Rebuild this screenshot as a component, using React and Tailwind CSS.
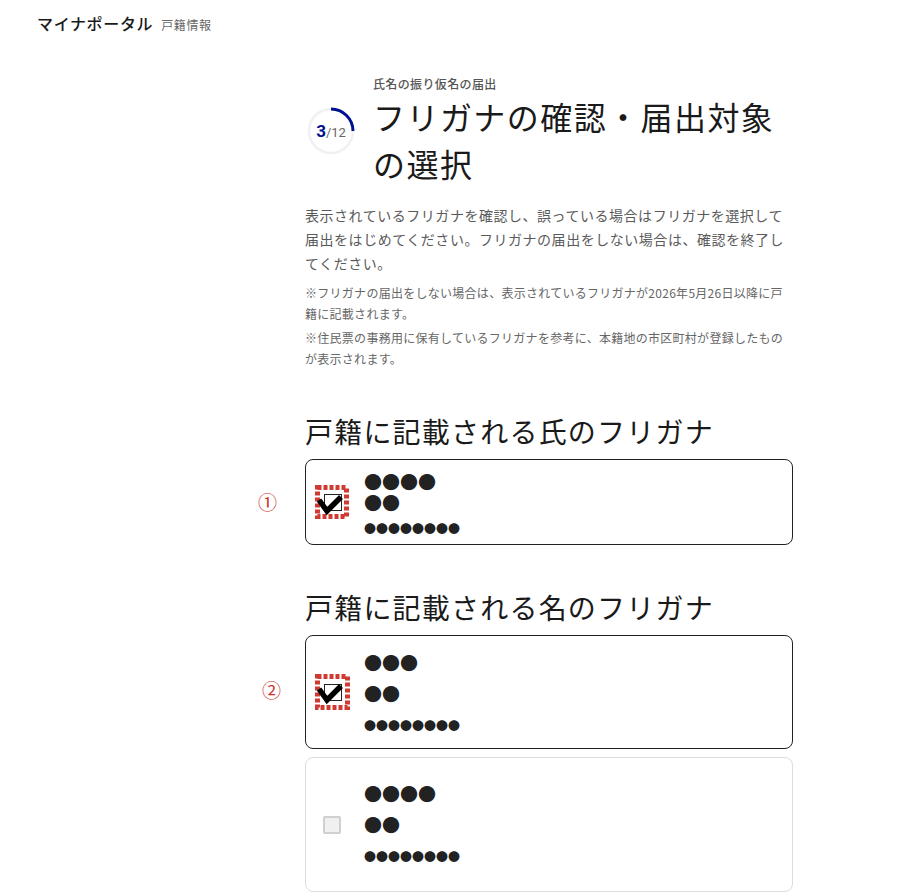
import React from 'react';

const jp = { fontFamily: '"Noto Sans CJK JP", sans-serif' };
const roboto = { fontFamily: 'Roboto, sans-serif' };

const Progress = () => (
  <div className="relative flex h-[48px] w-[48px] shrink-0 items-center justify-center tracking-normal" style={roboto}>
    <svg width="48" height="48" viewBox="0 0 48 48" className="absolute left-0 top-0">
      <circle cx="24" cy="24" r="22" fill="none" stroke="#f1f1f4" strokeWidth="2.5" />
      <path d="M24 2 A22 22 0 0 1 46 24" fill="none" stroke="#00118f" strokeWidth="3" />
    </svg>
    <span className="relative text-[17px] font-bold leading-none text-[#00118f]">3</span>
    <span className="relative mt-[3px] text-[13px] leading-none text-[#666]">/12</span>
  </div>
);

// 赤い点線の枠と太いチェックは説明用の書き込み
const MarkedCheckbox = ({ w, h }) => (
  <div className="relative flex shrink-0 items-center justify-center pl-[1px]" style={{ width: w, height: h }}>
    <svg width={w} height={h} className="absolute left-0 top-0">
      <rect x="2.5" y="2.5" width={w - 5} height={h - 5} fill="none" stroke="#cf3a32" strokeWidth="5" strokeDasharray="4 2" />
    </svg>
    <div className="relative h-[17px] w-[18px] border border-[#222] bg-white" />
    <svg width={w} height={h} className="absolute left-0 top-0">
      <path d="M4 15 L12 26 L26 12" fill="none" stroke="#000" strokeWidth="5.5" />
    </svg>
  </div>
);

const Card = ({ marked, w, h, mark, markClass, name, rowClass, smallClass, className, padClass = 'pt-[5px]' }) => (
  <div className={`relative flex items-center rounded-lg border pl-[9px] ${className}`}>
    {mark && (
      <span className={`absolute text-[19px] leading-none text-[#c8322c] ${markClass}`}>{mark}</span>
    )}
    {marked ? (
      <MarkedCheckbox w={w} h={h} />
    ) : (
      <div className="mx-[8px] h-[18px] w-[18px] rounded-[2px] border-2 border-[#d0d0d0] bg-[#f0f0f0]" />
    )}
    <div className={`${padClass} tracking-normal text-[#222] ${w === 35 ? 'ml-[14px]' : 'ml-[15px]'}`}>
      {name.map((n, i) => (
        <div key={i} className={`${rowClass} text-[18px]`}>{n}</div>
      ))}
      <div className={`${smallClass} text-[12px]`}>●●●●●●●●</div>
    </div>
  </div>
);

export default function App() {
  return (
    <div className="min-h-[893px] bg-white pt-[12px] tracking-[0.04em]" style={jp}>
      <header className="flex items-baseline pl-[37px]">
        <span className="text-[16px] font-medium leading-[22px] text-[#1a1a1a]">マイナポータル</span>
        <span className="ml-[8px] text-[12px] text-[#666]">戸籍情報</span>
      </header>

      <main className="ml-[305px] w-[488px] pt-[41px]">
        <div className="flex items-center">
          <div className="ml-[2px]"><Progress /></div>
          <div className="ml-[18px]">
            <p className="text-[12px] font-medium leading-[18px] tracking-[0.03em] text-[#555]">氏名の振り仮名の届出</p>
            <h1 className="text-[32px] font-normal leading-[47px] tracking-[0.045em] text-[#1a1a1a]">フリガナの確認・届出対象の選択</h1>
          </div>
        </div>

        <p className="mt-[16px] text-[14px] leading-[24px] tracking-[0.038em] text-[#5a5a5a]">
          表示されているフリガナを確認し、誤っている場合はフリガナを選択して届出をはじめてください。フリガナの届出をしない場合は、確認を終了してください。
        </p>
        <p className="mt-[7px] text-[12px] leading-[21px] tracking-[0.023em] text-[#666]">
          ※フリガナの届出をしない場合は、表示されているフリガナが2026年5月26日以降に戸籍に記載されます。
        </p>
        <p className="mt-[3px] text-[12px] leading-[21px] tracking-[0.023em] text-[#666]">
          ※住民票の事務用に保有しているフリガナを参考に、本籍地の市区町村が登録したものが表示されます。
        </p>

        <h2 className="mt-[42px] text-[28px] font-normal leading-[40px] tracking-[0.043em] text-[#1a1a1a]">戸籍に記載される氏のフリガナ</h2>
        <Card
          marked
          w={34}
          h={34}
          mark="①"
          markClass="left-[-48px] top-[32px]"
          name={['●●●●', '●●']}
          rowClass="leading-[21px]"
          smallClass="mt-[5px] leading-[21px]"
          className="mt-[8px] h-[86px] border-[#222]"
        />

        <h2 className="mt-[42px] text-[28px] font-normal leading-[40px] tracking-[0.043em] text-[#1a1a1a]">戸籍に記載される名のフリガナ</h2>
        <Card
          marked
          w={35}
          h={36}
          mark="②"
          markClass="left-[-44px] top-[44px]"
          name={['●●●', '●●']}
          rowClass="leading-[31px]"
          smallClass="leading-[33px]"
          className="mt-[8px] h-[114px] border-[#222]"
        />
        <Card
          name={['●●●●', '●●']}
          rowClass="leading-[31px]"
          smallClass="leading-[33px]"
          padClass="pt-[1px]"
          className="mt-[8px] h-[135px] border-[#ddd]"
        />
      </main>
    </div>
  );
}
